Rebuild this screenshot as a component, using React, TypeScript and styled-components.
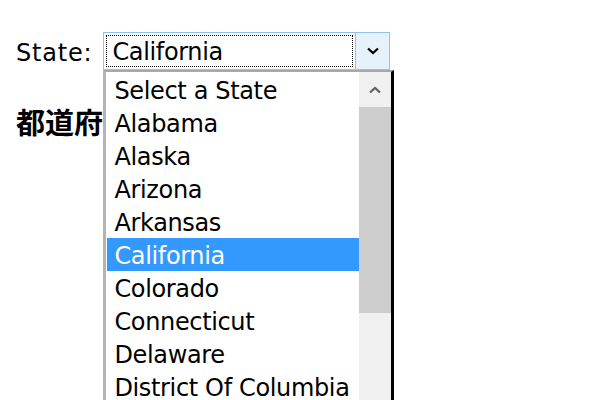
import React from "react";
import styled, { createGlobalStyle } from "styled-components";

const Global = createGlobalStyle`
  html, body { margin: 0; padding: 0; background: #fff; height: 100%; overflow: hidden; }
  #root { height: 100%; }
  body { font-family: "DejaVu Sans", "Noto Sans CJK JP", sans-serif; color: #000; }
`;

const Page = styled.div`
  height: 100%;
  box-sizing: border-box;
  padding: 32px 0 0 16px;
  display: flex;
  flex-direction: column;
  gap: 32px;
`;

const Row = styled.div`
  display: flex;
  align-items: flex-start;
  gap: 11px;
`;

const Label = styled.span`
  font-size: 24px;
  letter-spacing: 0.8px;
  line-height: 38px;
  padding-top: 2px;
`;

const SelectWrap = styled.div`
  position: relative;
`;

const SelectBox = styled.div`
  box-sizing: border-box;
  width: 287px;
  height: 38px;
  border: 1px solid #8ec3ee;
  display: flex;
  background: #fff;
`;

const Field = styled.div`
  flex: 1;
  margin: 2px;
  border: 1px dotted #000;
  padding: 2px 0 0 5px;
  font-size: 24px;
  letter-spacing: -0.35px;
  line-height: 28px;
  white-space: nowrap;
`;

const ArrowBtn = styled.div`
  width: 33px;
  border-left: 1px solid #8ec3ee;
  background: #e5f1fb;
  display: flex;
  align-items: center;
  justify-content: center;
`;

const List = styled.div`
  position: absolute;
  top: 38px;
  left: 0;
  width: 291px;
  height: 340px;
  box-sizing: border-box;
  border-top: 2px solid #a9a9a9;
  border-left: 3px solid #b4b4b4;
  border-right: 3px solid #000;
  background: #fff;
  display: flex;
  z-index: 2;
`;

const Items = styled.div`
  flex: 1;
  padding: 1px 0 0 1px;
`;

const Item = styled.div<{ $selected?: boolean }>`
  box-sizing: border-box;
  font-size: 24px;
  letter-spacing: -0.35px;
  height: 33px;
  padding: 3px 0 0 7px;
  line-height: 30px;
  white-space: nowrap;
  background: ${(p) => (p.$selected ? "#3399ff" : "transparent")};
  color: ${(p) => (p.$selected ? "#fff" : "#000")};
`;

const Scrollbar = styled.div`
  width: 32px;
  background: #f0f0f0;
  display: flex;
  flex-direction: column;
`;

const ScrollBtn = styled.div`
  height: 35px;
  display: flex;
  align-items: center;
  justify-content: center;
`;

const Thumb = styled.div`
  height: 206px;
  background: #cdcdcd;
`;

const Heading = styled.h2`
  margin: 0;
  font-size: 29px;
  font-weight: bold;
  line-height: 34px;
  font-family: "Noto Sans CJK JP", sans-serif;
`;

const states = [
  "Select a State",
  "Alabama",
  "Alaska",
  "Arizona",
  "Arkansas",
  "California",
  "Colorado",
  "Connecticut",
  "Delaware",
  "District Of Columbia",
];

export default function App() {
  return (
    <>
      <Global />
      <Page>
        <Row>
          <Label>State:</Label>
          <SelectWrap>
            <SelectBox>
              <Field>California</Field>
              <ArrowBtn>
                <svg width="12" height="8" viewBox="0 0 12 8">
                  <path d="M1 1.5 L6 6 L11 1.5" stroke="#000" strokeWidth="2.2" fill="none" />
                </svg>
              </ArrowBtn>
            </SelectBox>
            <List>
              <Items>
                {states.map((s) => (
                  <Item key={s} $selected={s === "California"}>
                    {s}
                  </Item>
                ))}
              </Items>
              <Scrollbar>
                <ScrollBtn>
                  <svg width="12" height="8" viewBox="0 0 12 8">
                    <path d="M1 6.5 L6 2 L11 6.5" stroke="#606060" strokeWidth="2.2" fill="none" />
                  </svg>
                </ScrollBtn>
                <Thumb />
              </Scrollbar>
            </List>
          </SelectWrap>
        </Row>
        <Heading>都道府県</Heading>
      </Page>
    </>
  );
}
